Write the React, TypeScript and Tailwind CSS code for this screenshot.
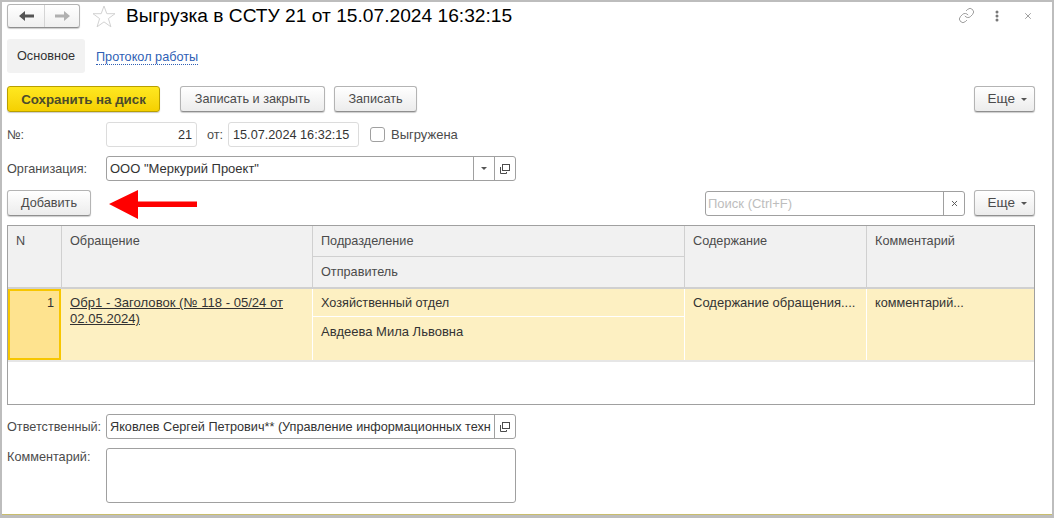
import { Link, X } from 'lucide-react'

const buttonClass =
  'h-[26px] shrink-0 rounded-[3px] border border-[#b4b4b4] border-b-[#8f8f8f] bg-gradient-to-b from-white to-[#ececec] pt-px shadow-[0_1px_1px_rgba(0,0,0,0.2)] text-[#4b4b4b]'

function Caret() {
  return <span className="inline-block border-x-[3px] border-t-[3px] border-x-transparent border-t-[#555]" />
}

function OpenIcon() {
  return (
    <svg width="10" height="10" viewBox="0 0 10 10" fill="none" stroke="#4b4b4b">
      <rect x="2.5" y="0.5" width="7" height="6" strokeWidth="1" />
      <path d="M0.5 3V9.5H6.5V8" strokeWidth="1" />
    </svg>
  )
}

function MoreButton() {
  return (
    <button className={`${buttonClass} flex w-[61px] items-center justify-end gap-[6px] pr-[7px] text-[13.5px]`}>
      Еще <Caret />
    </button>
  )
}

export default function App() {
  return (
    <div className="h-[518px] w-[1054px] overflow-hidden bg-[#bdbdbd] p-[2px] font-['Liberation_Sans',sans-serif] text-[12.7px] text-[#4b4b4b]">
      <div className="h-[513px] border-b border-[#c9bd6c] bg-white pl-[5px] pr-[17px]">
        {/* Title bar */}
        <div className="flex h-[37px] items-start pt-[2px]">
          <div className="flex h-[24px] w-[73px] rounded-[3px] border border-[#b4b4b4] border-b-[#8f8f8f] bg-gradient-to-b from-white to-[#f0f0f0] shadow-[0_1px_1px_rgba(0,0,0,0.2)]">
            <div className="flex w-[37px] items-center justify-center border-r border-[#d5d5d5]">
              <svg width="15" height="10" viewBox="0 0 15 10" fill="#555">
                <path d="M0 5L6 0V3.5H15V6.5H6V10Z" />
              </svg>
            </div>
            <div className="flex flex-1 items-center justify-center">
              <svg width="15" height="10" viewBox="0 0 15 10" fill="#b0b0b0">
                <path d="M15 5L9 0V3.5H0V6.5H9V10Z" />
              </svg>
            </div>
          </div>
          <svg className="ml-[12px] mt-[1px]" width="24" height="23" viewBox="0 0 24 23" fill="none" stroke="#d2d2d2">
            <path d="M12 1L14.8 8.7H23L16.4 13.6L18.9 21.8L12 16.9L5.1 21.8L7.6 13.6L1 8.7H9.2Z" />
          </svg>
          <h1 className="ml-[10px] text-[19.2px] font-normal leading-[24px] text-black">Выгрузка в ССТУ 21 от 15.07.2024 16:32:15</h1>
          <div className="ml-auto mr-[2px] mt-[3px] flex items-center text-[#666]">
            <Link className="h-[17px] w-[17px] text-[#777]" strokeWidth={1} />
            <svg className="ml-[20px]" width="4" height="12" viewBox="0 0 4 12" fill="#777">
              <circle cx="2" cy="2" r="1.5" />
              <circle cx="2" cy="6" r="1.5" />
              <circle cx="2" cy="10" r="1.5" />
            </svg>
            <X className="ml-[24px] h-[10px] w-[10px]" strokeWidth={1.5} />
          </div>
        </div>

        {/* Tabs */}
        <div className="flex h-[34px] items-center">
          <div className="flex h-[34px] w-[78px] items-center justify-center rounded-[3px] bg-[#f2f2f2] pt-[2px] text-[#333]">Основное</div>
          <a className="ml-[11px] mt-[2px] border-b border-dotted border-[#2f5fb5] leading-[14px] text-[#2f5fb5]">Протокол работы</a>
        </div>

        {/* Command bar */}
        <div className="mt-[13px] flex items-center">
          <button className="h-[26px] w-[153px] rounded-[3px] border border-[#b89f00] bg-gradient-to-b from-[#ffe81f] to-[#f5d000] pt-px text-[13.3px] font-bold text-[#4b4b2b] shadow-[0_1px_1px_rgba(0,0,0,0.2)]">
            Сохранить на диск
          </button>
          <button className={`${buttonClass} ml-[20px] w-[145px]`}>Записать и закрыть</button>
          <button className={`${buttonClass} ml-[9px] w-[83px]`}>Записать</button>
          <div className="ml-auto">
            <MoreButton />
          </div>
        </div>

        {/* Number and date */}
        <div className="mt-[10px] flex h-[25px] items-center">
          <span className="w-[99px] pt-[2px]">№:</span>
          <div className="flex h-[25px] w-[91px] items-center justify-end rounded-[3px] border border-[#dcdcdc] pr-[4px] pt-[2px] text-[#333]">21</div>
          <span className="ml-[10px] w-[21px] pt-[2px]">от:</span>
          <div className="flex h-[25px] w-[131px] items-center rounded-[3px] border border-[#dcdcdc] pl-[4px] pt-[2px] text-[#333]">15.07.2024 16:32:15</div>
          <span className="ml-[11px] h-[15px] w-[15px] rounded-[3px] border border-[#a0a0a0]" />
          <span className="ml-[6px] text-[13px]">Выгружена</span>
        </div>

        {/* Organization */}
        <div className="mt-[9px] flex h-[25px] items-center">
          <span className="w-[99px] pt-[2px]">Организация:</span>
          <div className="flex h-[25px] w-[410px] items-center rounded-[3px] border border-[#a0a0a0] text-[#333]">
            <span className="flex-1 pl-[3px] text-[13px]">ООО "Меркурий Проект"</span>
            <span className="flex h-full w-[21px] items-center justify-center border-l border-[#a0a0a0]">
              <Caret />
            </span>
            <span className="flex h-full w-[21px] items-center justify-center border-l border-[#a0a0a0]">
              <OpenIcon />
            </span>
          </div>
        </div>

        {/* Table toolbar */}
        <div className="mt-[9px] flex items-start">
          <button className={`${buttonClass} w-[84px]`}>Добавить</button>
          <svg className="ml-[18px]" width="88" height="29" viewBox="0 0 88 29" fill="#ff0000">
            <path d="M0 14L29 0V11.5H88V17H29V29Z" />
          </svg>
          <div className="ml-auto mt-px flex h-[25px] w-[260px] items-center rounded-[3px] border border-[#a0a0a0]">
            <span className="flex-1 pl-[2px] text-[13px] text-[#bdbdbd]">Поиск (Ctrl+F)</span>
            <span className="flex h-full w-[21px] items-center justify-center border-l border-[#a0a0a0]">
              <X className="h-[9px] w-[9px] text-[#555]" strokeWidth={2.5} />
            </span>
          </div>
          <div className="ml-[9px]">
            <MoreButton />
          </div>
        </div>

        {/* Table */}
        <div className="mt-[6px] h-[180px] border border-[#a0a0a0]">
          <div className="grid h-[63px] grid-cols-[54px_251px_372px_182px_1fr] grid-rows-[31px_30px] border-b-2 border-[#d0d0d0] bg-[#f1f1f1]">
            <div className="row-span-2 border-r border-[#d0d0d0] pl-[8px] pt-[6px]">N</div>
            <div className="row-span-2 border-r border-[#d0d0d0] pl-[8px] pt-[6px]">Обращение</div>
            <div className="border-r border-b border-[#d0d0d0] pl-[8px] pt-[6px]">Подразделение</div>
            <div className="row-span-2 border-r border-[#d0d0d0] pl-[8px] pt-[6px]">Содержание</div>
            <div className="row-span-2 pl-[8px] pt-[6px]">Комментарий</div>
            <div className="col-start-3 row-start-2 border-r border-[#d0d0d0] pl-[8px] pt-[6px]">Отправитель</div>
          </div>
          <div className="grid h-[73px] grid-cols-[54px_251px_372px_182px_1fr] border-b-2 border-[#e6e6e6] bg-[#fdf0c2] text-[#333]">
            <div className="mr-px border-2 border-[#f7c600] bg-[#fee38f] pr-[5px] pt-[3px] text-right">1</div>
            <div className="border-r border-white pl-[8px] pt-[6px] text-[13.1px] leading-[16px] underline">
              Обр1 - Заголовок (№ 118 - 05/24 от 02.05.2024)
            </div>
            <div className="flex flex-col border-r border-white">
              <div className="h-[28px] border-b border-white pl-[8px] pt-[5px]">Хозяйственный отдел</div>
              <div className="pl-[8px] pt-[5px] text-[13px]">Авдеева Мила Львовна</div>
            </div>
            <div className="border-r border-white pl-[8px] pt-[4px] text-[13px]">Содержание обращения....</div>
            <div className="pl-[8px] pt-[5px]">комментарий...</div>
          </div>
        </div>

        {/* Responsible */}
        <div className="mt-[9px] flex h-[25px] items-center">
          <span className="w-[99px] whitespace-nowrap pt-[2px]">Ответственный:</span>
          <div className="flex h-[25px] w-[410px] items-center rounded-[3px] border border-[#a0a0a0] text-[#333]">
            <span className="flex-1 overflow-hidden whitespace-nowrap pl-[3px] pt-[2px]">Яковлев Сергей Петрович** (Управление информационных техн</span>
            <span className="flex h-full w-[21px] shrink-0 items-center justify-center border-l border-[#a0a0a0]">
              <OpenIcon />
            </span>
          </div>
        </div>

        {/* Comment */}
        <div className="mt-[9px] flex">
          <span className="w-[99px]">Комментарий:</span>
          <div className="h-[55px] w-[410px] rounded-[3px] border border-[#a0a0a0]" />
        </div>
      </div>
    </div>
  )
}
